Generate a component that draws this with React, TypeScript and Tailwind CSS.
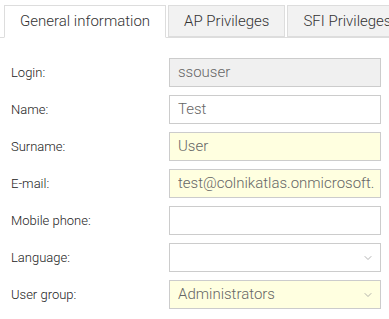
import { ChevronDown } from "lucide-react";

const rows: { label: string; value?: string; tone: "gray" | "white" | "yellow"; select?: boolean }[] = [
  { label: "Login:", value: "ssouser", tone: "gray" },
  { label: "Name:", value: "Test", tone: "white" },
  { label: "Surname:", value: "User", tone: "yellow" },
  { label: "E-mail:", value: "test@colnikatlas.onmicrosoft.com", tone: "yellow" },
  { label: "Mobile phone:", tone: "white" },
  { label: "Language:", tone: "white", select: true },
  { label: "User group:", value: "Administrators", tone: "yellow", select: true },
];

export default function App() {
  return (
    <div className="h-[319px] w-[389px] overflow-hidden bg-white font-['Roboto',sans-serif] font-light">
      <div className="flex h-[38px] items-end border-b border-[#dddddd] pl-[4px]">
        <div className="-mb-px flex h-[33px] shrink-0 items-center border border-b-white border-[#dddddd] bg-white px-[15px] text-[15px] text-[#333]">
          General information
        </div>
        <div className="ml-[2px] flex h-[32px] shrink-0 items-center border border-[#dddddd] bg-[#f2f2f2] px-[15px] text-[15px] text-[#333]">
          AP Privileges
        </div>
        <div className="ml-[2px] flex h-[32px] shrink-0 items-center border border-[#dddddd] bg-[#f2f2f2] px-[15px] text-[15px] text-[#333]">
          SFI Privileges
        </div>
      </div>
      <div className="flex flex-col gap-[8px] pt-[20px]">
        {rows.map((r) => {
          const bg = { gray: "bg-[#f0f0f0]", white: "bg-white", yellow: "bg-[#ffffe0]" }[r.tone];
          return (
            <div key={r.label} className="flex h-[29px] items-center">
              <div className="w-[169px] pl-[11px] text-[13px] text-[#222]">{r.label}</div>
              <div className={`flex h-[29px] w-[212px] items-center overflow-hidden whitespace-nowrap border border-[#cccccc] ${bg} pl-[8px] pr-[6px] text-[15px] text-[#666]`}>
                <span className="flex-1 overflow-hidden">{r.value}</span>
                {r.select && <ChevronDown className="h-[12px] w-[12px] shrink-0 text-[#999]" strokeWidth={1.5} />}
              </div>
            </div>
          );
        })}
      </div>
    </div>
  );
}
